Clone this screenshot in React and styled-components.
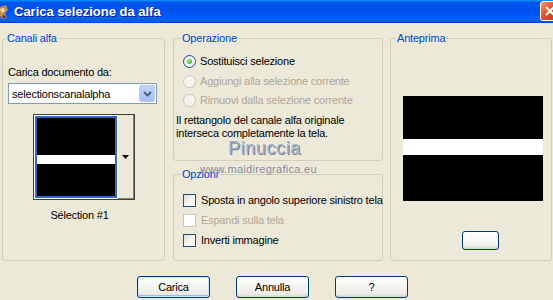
import React from 'react'
import styled, { createGlobalStyle } from 'styled-components'

const Global = createGlobalStyle`
    html, body {
        margin: 0;
        padding: 0;
        background: #ece9d8;
    }
    body {
        font-family: "Liberation Sans", Arial, sans-serif;
        font-size: 11px;
        letter-spacing: -0.2px;
        color: #000;
    }
`

const Window = styled.div`
    width: 553px;
    height: 300px;
    overflow: hidden;
    background: #ece9d8;
    position: relative;
`

const TitleBar = styled.div`
    height: 23px;
    display: flex;
    align-items: center;
    background: linear-gradient(to bottom, #0a97ff 0%, #0055ea 10%, #0050ee 45%, #0062fb 85%, #005cf8 92%, #003dd7 100%);
    color: #fff;
    font-family: "Liberation Sans", Arial, sans-serif;
    font-weight: bold;
    font-size: 13px;
    letter-spacing: 0;
    text-shadow: 1px 1px 0 #0a1e8c;
    position: relative;

    .title {
        margin-left: 5px;
    }
`

const CloseBtn = styled.div`
    position: absolute;
    left: 540px;
    top: 1px;
    width: 21px;
    height: 20px;
    border: 1px solid #fff;
    border-radius: 3px;
    background: linear-gradient(135deg, #f29878 0%, #e0502c 45%, #c83a12 100%);
    box-sizing: border-box;
    display: flex;
    align-items: center;
    padding-left: 3px;
`

const Body = styled.div`
    padding: 9px 0 0 2px;
    display: flex;
    flex-direction: column;
`

const Columns = styled.div`
    display: flex;
    align-items: flex-start;
`

const Group = styled.fieldset`
    margin: 0;
    flex: none;
    min-width: 0;
    box-sizing: border-box;
    width: ${p => p.$w}px;
    height: ${p => p.$h}px;
    margin-left: ${p => p.$ml || 0}px;
    border: 1px solid #d0d0bf;
    border-radius: 3px;
    padding: 0 ${p => p.$pr || 6}px 0 ${p => p.$pl || 6}px;
    position: relative;
    display: block;

    legend {
        color: #0046d5;
        padding: 0 1px;
        margin-left: ${p => p.$lm || 0}px;
        line-height: 13px;
    }
`

const MidCol = styled.div`
    flex: none;
    width: 210px;
    display: flex;
    flex-direction: column;
    gap: 7px;
    margin-left: 8px;
`

const FieldLabel = styled.div`
    margin-top: 21px;
    line-height: 13px;
`

const Select = styled.div`
    margin-top: 4px;
    height: 21px;
    box-sizing: border-box;
    border: 1px solid #7f9db9;
    background: #fff;
    display: flex;
    align-items: center;
    padding-left: 3px;
    justify-content: space-between;

    .arrow {
        width: 16px;
        height: 17px;
        margin-right: 1px;
        border-radius: 2px;
        background: linear-gradient(to bottom, #c1d3fb, #b4c8f6 60%, #a8bdf2);
        border: 1px solid #b9cbf3;
        box-sizing: border-box;
        display: flex;
        align-items: center;
        justify-content: center;
    }
`

const ThumbWrap = styled.div`
    margin: 10px 0 0 25px;
    display: flex;
    width: 102px;
    height: 86px;
    box-sizing: border-box;
    border: 1px solid #404040;
    background: #fff;
`

const Thumb = styled.div`
    width: 82px;
    box-sizing: border-box;
    border: 2px solid #316ac5;
    background: #000;
    margin: 1px 0 1px 1px;
    display: flex;
    flex-direction: column;

    .top {
        height: 37px;
    }
    .stripe {
        height: 9px;
        background: #fff;
    }
`

const ThumbArrow = styled.div`
    flex: 1;
    background: #ece9d8;
    border-left: 1px solid #fff;
    border-right: 1px solid #808080;
    border-bottom: 1px solid #808080;
    display: flex;
    align-items: center;
    justify-content: center;
`

const Caption = styled.div`
    margin-top: 9px;
    text-align: center;
    padding-right: 6px;
    line-height: 13px;
`

const OptionRow = styled.div`
    display: flex;
    align-items: center;
    height: ${p => p.$h || 19}px;
    color: ${p => (p.$disabled ? '#aca899' : '#000')};
    gap: 4px;
    white-space: nowrap;
`

const Radio = styled.span`
    width: 13px;
    height: 13px;
    flex: none;
    box-sizing: border-box;
    border-radius: 50%;
    border: 1px solid ${p => (p.$disabled ? '#cac8bb' : '#1c5180')};
    background: ${p => (p.$disabled ? '#f4f3ee' : 'linear-gradient(135deg, #dcdcd6, #fff 70%)')};
    display: flex;
    align-items: center;
    justify-content: center;

    &::after {
        content: '';
        width: 5px;
        height: 5px;
        border-radius: 50%;
        background: ${p => (p.$checked ? 'radial-gradient(circle at 35% 35%, #9bee7e, #21a121)' : 'transparent')};
    }
`

const Check = styled.span`
    width: 13px;
    height: 13px;
    flex: none;
    box-sizing: border-box;
    border: 1px solid ${p => (p.$disabled ? '#cac8bb' : '#1c5180')};
    background: ${p => (p.$disabled ? '#fff' : 'linear-gradient(135deg, #dcdcd6, #fff 80%)')};
    margin-right: 1px;
`

const OpList = styled.div`
    margin-top: 6px;
    padding-left: 3px;
`

const Note = styled.div`
    margin-top: 5px;
    margin-left: -4px;
    line-height: 13px;
`

const CheckList = styled.div`
    margin-top: 9px;
    padding-left: 3px;
`

const Preview = styled.div`
    width: 140px;
    height: 105px;
    margin: 51px 0 0 7px;
    background: #000;
    display: flex;
    flex-direction: column;

    .top {
        height: 43px;
    }
    .stripe {
        height: 16px;
        background: #fff;
    }
`

const SmallBtn = styled.div`
    width: 37px;
    height: 19px;
    box-sizing: border-box;
    margin: 30px 0 0 66px;
    border: 1px solid #003c74;
    border-radius: 3px;
    background: linear-gradient(to bottom, #fff, #f0f0ea 80%, #d6d0c5);
`

const ButtonRow = styled.div`
    display: flex;
    gap: 26px;
    padding-left: 135px;
    margin-top: 15px;
`

const Button = styled.div`
    width: 73px;
    height: 22px;
    box-sizing: border-box;
    border: 1px solid #003c74;
    border-radius: 3px;
    background: linear-gradient(to bottom, #fff 0%, #f6f6f3 40%, #ecebe6 85%, #d6d0c5 100%);
    display: flex;
    align-items: center;
    justify-content: center;
    box-shadow: ${p => (p.$default ? 'inset 0 0 0 1px #cee7ff, inset 0 -1px 0 1px #98b8ea' : 'none')};
`

const Watermark = styled.div`
    position: absolute;
    left: 200px;
    top: 138px;
    pointer-events: none;

    .big {
        font-family: "Liberation Sans", Arial, sans-serif;
        font-size: 18px;
        letter-spacing: 0.6px;
        color: #aab1c4;
        text-shadow: 1px 1px 0 #737d98, -1px 0 0 #e6e8ef;
        line-height: 20px;
        margin-left: 28px;
    }
    .small {
        font-family: "Liberation Sans", Arial, sans-serif;
        font-size: 11px;
        color: #858ca0;
        letter-spacing: 0.3px;
        line-height: 12px;
        margin-top: 5px;
    }
`

function AppIcon() {
    return (
        <svg width="9" height="16" viewBox="0 0 9 16">
            <path d="M0 3 L6 1 L8 6 L5 9 L7 14 L2 15 L0 12 Z" fill="#c58a4a" />
            <path d="M0 5 L4 4 L5 7 L2 9 Z" fill="#f4d9a8" />
            <path d="M3 11 L6 12 L5 14 L2 14 Z" fill="#6b3a18" />
        </svg>
    )
}

export default function App() {
    return (
        <Window>
            <Global />
            <TitleBar>
                <AppIcon />
                <span className="title">Carica selezione da alfa</span>
                <CloseBtn>
                    <svg width="12" height="12" viewBox="0 0 12 12">
                        <path d="M2 2 L10 10 M10 2 L2 10" stroke="#fff" strokeWidth="2" />
                    </svg>
                </CloseBtn>
            </TitleBar>
            <Body>
                <Columns>
                    <Group $w={163} $h={229} $pl={5} $pr={7} $lm={-2}>
                        <legend>Canali alfa</legend>
                        <FieldLabel>Carica documento da:</FieldLabel>
                        <Select>
                            <span>selectionscanalalpha</span>
                            <span className="arrow">
                                <svg width="9" height="6" viewBox="0 0 9 6">
                                    <path d="M1 1 L4.5 4.5 L8 1" stroke="#4d6185" strokeWidth="2" fill="none" />
                                </svg>
                            </span>
                        </Select>
                        <ThumbWrap>
                            <Thumb>
                                <div className="top" />
                                <div className="stripe" />
                            </Thumb>
                            <ThumbArrow>
                                <svg width="7" height="4" viewBox="0 0 7 4">
                                    <path d="M0 0 H7 L3.5 4 Z" fill="#000" />
                                </svg>
                            </ThumbArrow>
                        </ThumbWrap>
                        <Caption>Sélection #1</Caption>
                    </Group>
                    <MidCol>
                        <Group $w={210} $h={129} $pl={6} $lm={1}>
                            <legend>Operazione</legend>
                            <OpList>
                                <OptionRow $h={20}>
                                    <Radio $checked />
                                    <span>Sostituisci selezione</span>
                                </OptionRow>
                                <OptionRow $h={20} $disabled>
                                    <Radio $disabled />
                                    <span>Aggiungi alla selezione corrente</span>
                                </OptionRow>
                                <OptionRow $h={18} $disabled>
                                    <Radio $disabled />
                                    <span>Rimuovi dalla selezione corrente</span>
                                </OptionRow>
                            </OpList>
                            <Note>
                                Il rettangolo del canale alfa originale
                                <br />
                                interseca completamente la tela.
                            </Note>
                        </Group>
                        <Group $w={210} $h={93} $pl={6} $lm={1}>
                            <legend>Opzioni</legend>
                            <CheckList>
                                <OptionRow $h={20}>
                                    <Check />
                                    <span>Sposta in angolo superiore sinistro tela</span>
                                </OptionRow>
                                <OptionRow $h={20} $disabled>
                                    <Check $disabled />
                                    <span>Espandi sulla tela</span>
                                </OptionRow>
                                <OptionRow $h={20}>
                                    <Check />
                                    <span>Inverti immagine</span>
                                </OptionRow>
                            </CheckList>
                        </Group>
                    </MidCol>
                    <Group $w={162} $h={229} $ml={7} $pl={5} $lm={0}>
                        <legend>Anteprima</legend>
                        <Preview>
                            <div className="top" />
                            <div className="stripe" />
                        </Preview>
                        <SmallBtn />
                    </Group>
                </Columns>
                <ButtonRow>
                    <Button $default>Carica</Button>
                    <Button>Annulla</Button>
                    <Button>?</Button>
                </ButtonRow>
            </Body>
            <Watermark>
                <div className="big">Pinuccia</div>
                <div className="small">www.maidiregrafica.eu</div>
            </Watermark>
        </Window>
    )
}
